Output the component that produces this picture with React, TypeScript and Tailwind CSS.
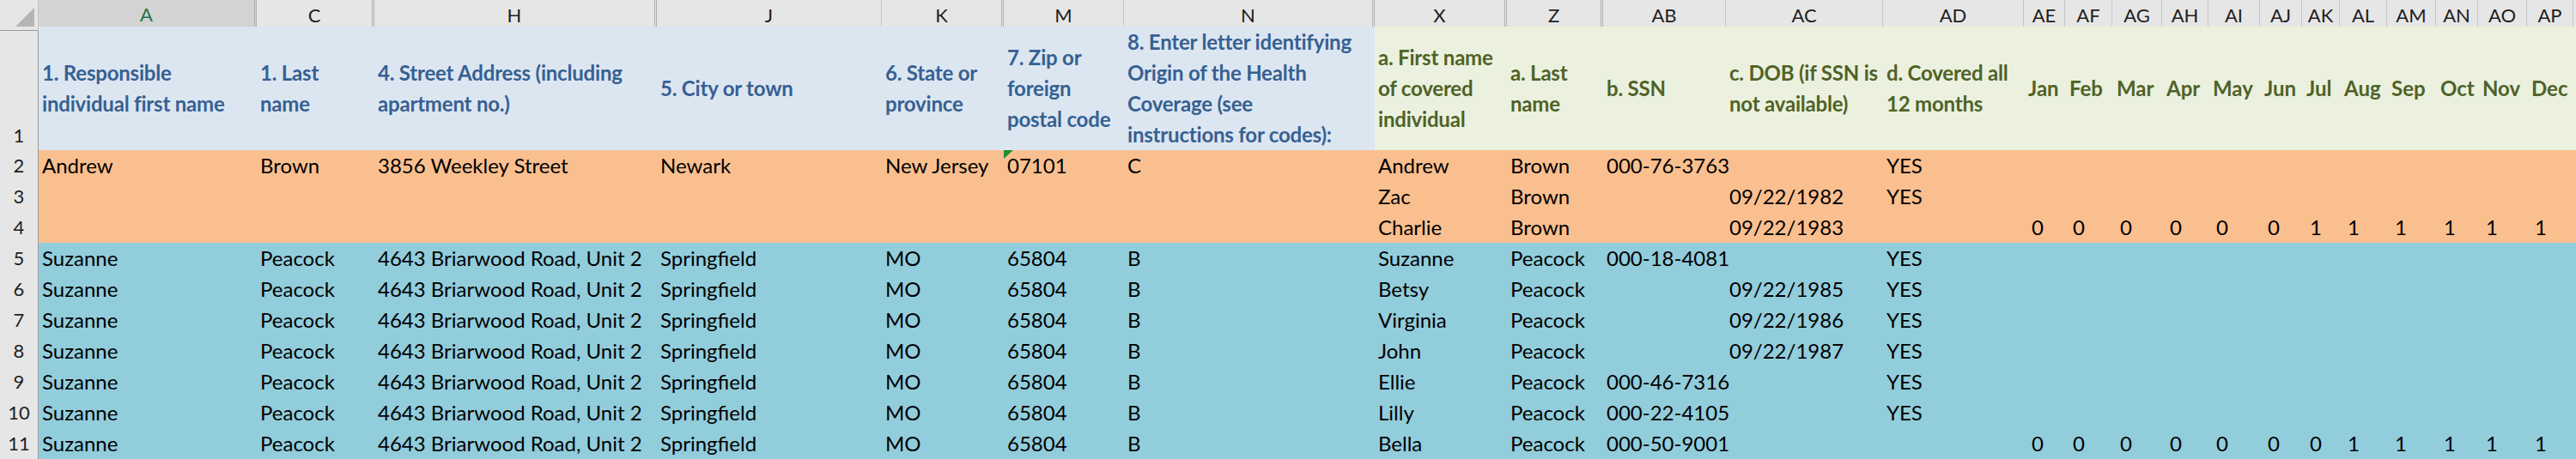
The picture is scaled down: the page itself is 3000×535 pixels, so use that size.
import React from 'react';

const GRID =
  'grid grid-cols-[45px_254px_137px_329px_262px_142px_140px_292px_154px_112px_143px_183px_164px_48px_55px_58px_54px_60px_49px_44px_55px_57px_49px_57px_54px_3px]';

const COLS = [
  { id: 'A', dbl: true },
  { id: 'C', dbl: true },
  { id: 'H', dbl: true },
  { id: 'J', dbl: false },
  { id: 'K', dbl: true },
  { id: 'M', dbl: false },
  { id: 'N', dbl: true },
  { id: 'X', dbl: true },
  { id: 'Z', dbl: true },
  { id: 'AB', dbl: false },
  { id: 'AC', dbl: false },
  { id: 'AD', dbl: false },
  { id: 'AE', dbl: false },
  { id: 'AF', dbl: false },
  { id: 'AG', dbl: false },
  { id: 'AH', dbl: false },
  { id: 'AI', dbl: false },
  { id: 'AJ', dbl: false },
  { id: 'AK', dbl: false },
  { id: 'AL', dbl: false },
  { id: 'AM', dbl: false },
  { id: 'AN', dbl: false },
  { id: 'AO', dbl: false },
  { id: 'AP', dbl: false },
];

const BLUE_HEADERS = [
  ['1. Responsible', 'individual first name'],
  ['1. Last', 'name'],
  ['4. Street Address (including', 'apartment no.)'],
  ['5. City or town'],
  ['6. State or', 'province'],
  ['7. Zip or', 'foreign', 'postal code'],
  ['8. Enter letter identifying', 'Origin of the Health', 'Coverage (see', 'instructions for codes):'],
];

const GREEN_HEADERS = [
  ['a. First name', 'of covered', 'individual'],
  ['a. Last', 'name'],
  ['b. SSN'],
  ['c. DOB (if SSN is', 'not available)'],
  ['d. Covered all', '12 months'],
];

const MONTHS = ['Jan', 'Feb', 'Mar', 'Apr', 'May', 'Jun', 'Jul', 'Aug', 'Sep', 'Oct', 'Nov', 'Dec'];

const ZERO_SIX = ['0', '0', '0', '0', '0', '0', '1', '1', '1', '1', '1', '1'];
const ZERO_SEVEN = ['0', '0', '0', '0', '0', '0', '0', '1', '1', '1', '1', '1'];
const NONE = ['', '', '', '', '', '', '', '', '', '', '', ''];

type Row = { n: number; tone: 'orange' | 'aqua'; cells: string[]; months: string[] };

const SUZ = ['Suzanne', 'Peacock', '4643 Briarwood Road, Unit 2', 'Springfield', 'MO', '65804', 'B'];
const BLANK = ['', '', '', '', '', '', ''];

const ROWS: Row[] = [
  { n: 2, tone: 'orange', cells: ['Andrew', 'Brown', '3856 Weekley Street', 'Newark', 'New Jersey', '07101', 'C', 'Andrew', 'Brown', '000-76-3763', '', 'YES'], months: NONE },
  { n: 3, tone: 'orange', cells: [...BLANK, 'Zac', 'Brown', '', '09/22/1982', 'YES'], months: NONE },
  { n: 4, tone: 'orange', cells: [...BLANK, 'Charlie', 'Brown', '', '09/22/1983', ''], months: ZERO_SIX },
  { n: 5, tone: 'aqua', cells: [...SUZ, 'Suzanne', 'Peacock', '000-18-4081', '', 'YES'], months: NONE },
  { n: 6, tone: 'aqua', cells: [...SUZ, 'Betsy', 'Peacock', '', '09/22/1985', 'YES'], months: NONE },
  { n: 7, tone: 'aqua', cells: [...SUZ, 'Virginia', 'Peacock', '', '09/22/1986', 'YES'], months: NONE },
  { n: 8, tone: 'aqua', cells: [...SUZ, 'John', 'Peacock', '', '09/22/1987', 'YES'], months: NONE },
  { n: 9, tone: 'aqua', cells: [...SUZ, 'Ellie', 'Peacock', '000-46-7316', '', 'YES'], months: NONE },
  { n: 10, tone: 'aqua', cells: [...SUZ, 'Lilly', 'Peacock', '000-22-4105', '', 'YES'], months: NONE },
  { n: 11, tone: 'aqua', cells: [...SUZ, 'Bella', 'Peacock', '000-50-9001', '', ''], months: ZERO_SEVEN },
];

const FONT = "font-['Lato','Liberation_Sans',sans-serif]";

function ColumnHeaders() {
  return (
    <div className={`${GRID} h-[31px]`}>
      <div className="relative bg-[#e6e6e6] border-r border-r-[#c6c6c6] border-b border-b-[#9b9b9b]">
        <svg className="absolute right-[4px] bottom-[4px]" width="22" height="22" viewBox="0 0 22 22">
          <polygon points="22,0 22,22 0,22" fill="#b5b5b5" />
        </svg>
      </div>
      {COLS.map((c) =>
        c.id === 'A' ? (
          <div
            key={c.id}
            className="flex items-center justify-center bg-[#d3d3d3] text-[#217346] text-[22px] border-r-[3px] border-double border-r-[#b0b0b0] border-b-[3px] border-b-[#217346]"
          >
            {c.id}
          </div>
        ) : (
          <div
            key={c.id}
            className={`flex items-center justify-center bg-[#e6e6e6] text-[#1e1e1e] text-[22px] border-b border-b-[#9b9b9b] ${
              c.dbl ? 'border-r-[3px] border-double border-r-[#b0b0b0]' : 'border-r border-r-[#c6c6c6]'
            }`}
          >
            {c.id}
          </div>
        ),
      )}
      <div className="bg-[#e6e6e6] border-b border-b-[#9b9b9b]" />
    </div>
  );
}

function HeaderCell({ lines, tone }: { lines: string[]; tone: 'blue' | 'green' }) {
  return (
    <div
      className={`flex flex-col justify-center pl-[4px] font-bold leading-[36px] tracking-[-0.2px] whitespace-nowrap ${
        tone === 'blue' ? 'bg-[#dce6f1] text-[#366092]' : 'bg-[#ebf1de] text-[#4f6228]'
      }`}
    >
      {lines.map((l) => (
        <div key={l} className="relative z-[1]">
          {l}
        </div>
      ))}
    </div>
  );
}

function TitleRow() {
  return (
    <div className={`${GRID} h-[144px] text-[24px] border-b border-b-[#7a7a7a]`}>
      <div className="flex items-end justify-center bg-[#e6e6e6] border-r border-r-[#9b9b9b] text-[22px] text-[#1e1e1e] leading-[34px]">
        1
      </div>
      {BLUE_HEADERS.map((lines, i) => (
        <HeaderCell key={i} lines={lines} tone="blue" />
      ))}
      {GREEN_HEADERS.map((lines, i) => (
        <HeaderCell key={i} lines={lines} tone="green" />
      ))}
      {MONTHS.map((m) => (
        <div key={m} className="flex items-center pl-[5px] bg-[#ebf1de] text-[#4f6228] font-bold">
          {m}
        </div>
      ))}
      <div className="bg-[#ebf1de]" />
    </div>
  );
}

function DataRow({ row }: { row: Row }) {
  const bg = row.tone === 'orange' ? 'bg-[#fabf8f]' : 'bg-[#92cddc]';
  return (
    <div className={`${GRID} h-[36px] text-[24px] leading-[36px] text-black border-b border-b-[#7a7a7a]`}>
      <div className="flex justify-center bg-[#e6e6e6] border-r border-r-[#9b9b9b] text-[22px] text-[#1e1e1e]">
        {row.n}
      </div>
      {row.cells.map((v, i) => (
        <div key={i} className={`relative pl-[4px] whitespace-nowrap ${bg}`}>
          {i === 5 && v === '07101' && (
            <svg className="absolute left-0 top-0" width="11" height="10" viewBox="0 0 11 10">
              <polygon points="0,0 11,0 0,10" fill="#1e8a32" />
            </svg>
          )}
          <span className="relative z-[1]">{v}</span>
        </div>
      ))}
      {row.months.map((v, i) => (
        <div key={i} className={`pl-[9px] ${bg}`}>
          {v}
        </div>
      ))}
      <div className={bg} />
    </div>
  );
}

export default function App() {
  return (
    <div className={`w-[3000px] h-[535px] overflow-hidden bg-white ${FONT}`}>
      <ColumnHeaders />
      <TitleRow />
      {ROWS.map((r) => (
        <DataRow key={r.n} row={r} />
      ))}
    </div>
  );
}
